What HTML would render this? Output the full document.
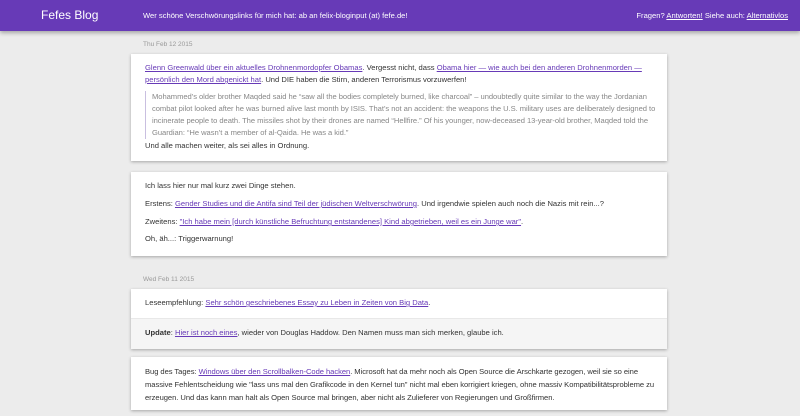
<!DOCTYPE html>
<html><head><meta charset="utf-8"><style>
*{margin:0;padding:0;box-sizing:border-box}
body{width:800px;height:416px;overflow:hidden;background:#ececec;font-family:"Liberation Sans",Arial,sans-serif;font-size:7.6px;color:#333}
a{color:#673ab7;text-decoration:underline}
.hdr{position:absolute;left:0;top:0;width:800px;height:31px;background:#673ab7;box-shadow:0 2px 4px rgba(0,0,0,.3);color:#fff}
.hdr .t{position:absolute;left:41px;top:8px;font-size:12px}
.hdr .m{position:absolute;left:143px;top:11px;font-size:7.6px}
.hdr .r{position:absolute;right:12px;top:11px;font-size:7.6px}
.hdr a{color:#fff}
.date{position:absolute;left:143px;font-size:6.5px;color:#999}
.card{position:absolute;left:131px;width:536px;background:#fff;box-shadow:0 1px 3px rgba(0,0,0,.3)}
.card p{position:absolute;left:14px;right:14px;line-height:12px}
.bq{position:absolute;left:14px;right:4px;border-left:1px solid #c9bfe0;padding-left:6px;color:#888;line-height:12px;letter-spacing:-0.05px}
</style></head><body>
<div class="hdr"><div class="t">Fefes Blog</div><div class="m">Wer schöne Verschwörungslinks für mich hat: ab an felix-bloginput (at) fefe.de!</div><div class="r">Fragen? <a>Antworten!</a> Siehe auch: <a>Alternativlos</a></div></div>
<div class="date" style="top:41px">Thu Feb 12 2015</div>
<div class="card" style="top:54px;height:107px">
<p style="top:8px"><a>Glenn Greenwald über ein aktuelles Drohnenmordopfer Obamas</a>. Vergesst nicht, dass <a>Obama hier — wie auch bei den anderen Drohnenmorden — persönlich den Mord abgenickt hat</a>. Und DIE haben die Stirn, anderen Terrorismus vorzuwerfen!</p>
<div class="bq" style="top:37px">Mohammed’s older brother Maqded said he “saw all the bodies completely burned, like charcoal” – undoubtedly quite similar to the way the Jordanian combat pilot looked after he was burned alive last month by ISIS. That’s not an accident: the weapons the U.S. military uses are deliberately designed to incinerate people to death. The missiles shot by their drones are named “Hellfire.” Of his younger, now-deceased 13-year-old brother, Maqded told the Guardian: “He wasn’t a member of al-Qaida. He was a kid.”</div>
<p style="top:86px">Und alle machen weiter, als sei alles in Ordnung.</p>
</div>
<div class="card" style="top:172px;height:84px">
<p style="top:8px">Ich lass hier nur mal kurz zwei Dinge stehen.</p>
<p style="top:26px">Erstens: <a>Gender Studies und die Antifa sind Teil der jüdischen Weltverschwörung</a>. Und irgendwie spielen auch noch die Nazis mit rein...?</p>
<p style="top:44px">Zweitens: <a>"Ich habe mein [durch künstliche Befruchtung entstandenes] Kind abgetrieben, weil es ein Junge war"</a>.</p>
<p style="top:61px">Oh, äh...: Triggerwarnung!</p>
</div>
<div class="date" style="top:276px">Wed Feb 11 2015</div>
<div class="card" style="top:289px;height:60px">
<p style="top:8px">Leseempfehlung: <a>Sehr schön geschriebenes Essay zu Leben in Zeiten von Big Data</a>.</p>
<div style="position:absolute;left:0;right:0;top:29px;bottom:0;background:#f5f5f5;border-top:1px solid #e8e8e8"></div>
<p style="top:38px"><b>Update</b>: <a>Hier ist noch eines</a>, wieder von Douglas Haddow. Den Namen muss man sich merken, glaube ich.</p>
</div>
<div class="card" style="top:357px;height:53px">
<p style="top:8px;line-height:13px;right:6px;letter-spacing:-0.05px">Bug des Tages: <a>Windows über den Scrollbalken-Code hacken</a>. Microsoft hat da mehr noch als Open Source die Arschkarte gezogen, weil sie so eine massive Fehlentscheidung wie "lass uns mal den Grafikcode in den Kernel tun" nicht mal eben korrigiert kriegen, ohne massiv Kompatibilitätsprobleme zu erzeugen. Und das kann man halt als Open Source mal bringen, aber nicht als Zulieferer von Regierungen und Großfirmen.</p>
</div>
</body></html>
